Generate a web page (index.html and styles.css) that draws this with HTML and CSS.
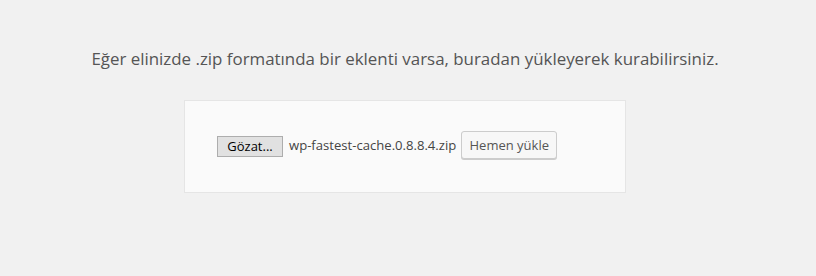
FILE: index.html
```html
<!DOCTYPE html>
<html lang="tr">
<head>
    <meta charset="UTF-8">
    <meta name="viewport" content="width=device-width, initial-scale=1.0">
    <title>Eklenti yükle</title>
    <link rel="stylesheet" href="styles.css">
</head>
<body>
    <div class="wrap">
        <p class="install-help">Eğer elinizde .zip formatında bir eklenti varsa, buradan yükleyerek kurabilirsiniz.</p>
        <form class="upload-form" onsubmit="return false">
            <span class="file-btn">Gözat...</span>
            <span class="file-name">wp-fastest-cache.0.8.8.4.zip</span>
            <button type="submit" class="button">Hemen yükle</button>
        </form>
    </div>
</body>
</html>
```

FILE: styles.css
```css
html, body { margin: 0; background: #f1f1f1; }
body { font-family: "Open Sans", "Noto Sans", sans-serif; color: #444; }
.wrap { width: 810px; text-align: center; }
.install-help { margin: 0; padding-top: 47px; font-size: 16.9px; line-height: 24px; color: #555; }
.upload-form { box-sizing: border-box; width: 442px; height: 93px; margin: 29px auto 0; padding: 30px 32px 0; background: #fafafa; border: 1px solid #e5e5e5; display: flex; align-items: flex-start; }
.file-btn { box-sizing: border-box; width: 66px; height: 21px; margin-top: 5px; background: #e1e1e1; border: 1px solid #adadad; color: #000; font-size: 13px; line-height: 19px; text-align: center; }
.file-name { margin: 0 5px 0 6px; font-size: 13.1px; line-height: 28px; color: #444; white-space: nowrap; }
.button { box-sizing: border-box; width: 96px; height: 28px; padding: 0; background: #f7f7f7; border: 1px solid #ccc; border-radius: 3px; box-shadow: 0 1px 0 #ccc; color: #555; font-family: inherit; font-size: 13px; cursor: pointer; }
```
